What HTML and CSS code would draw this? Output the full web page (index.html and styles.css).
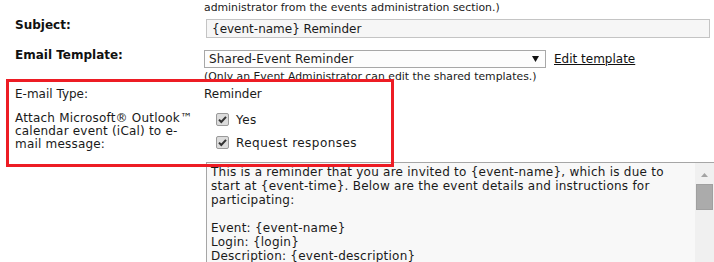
FILE: index.html
```html
<!DOCTYPE html>
<html lang="en">
<head>
<meta charset="utf-8">
<title>Email settings</title>
<link rel="stylesheet" href="styles.css">
</head>
<body>
<div class="page">
  <p class="note top-note">administrator from the events administration section.)</p>

  <div class="row row-subject">
    <div class="label bold">Subject:</div>
    <div class="value"><input class="text-input" type="text" value="{event-name} Reminder"></div>
  </div>

  <div class="row row-template">
    <div class="label bold">Email Template:</div>
    <div class="value template-value">
      <div class="select">
        <span class="select-text">Shared-Event Reminder</span>
        <svg class="select-arrow" width="7" height="6" viewBox="0 0 7 6"><path d="M0 0H7L3.5 6Z" fill="#111"/></svg>
      </div>
      <a class="link" href="#">Edit template</a>
    </div>
  </div>

  <p class="note indent-note">(Only an Event Administrator can edit the shared templates.)</p>

  <div class="row row-type">
    <div class="label">E-mail Type:</div>
    <div class="value">Reminder</div>
  </div>

  <div class="row row-attach">
    <div class="label attach-label">Attach Microsoft® Outlook™<br>calendar event (iCal) to e-<br>mail message:</div>
    <div class="value options">
      <div class="option">
        <svg class="check" width="13" height="13" viewBox="0 0 13 13"><rect x="0.5" y="0.5" width="12" height="12" rx="1.5" fill="#dcdcdc" stroke="#9a9a9a"/><path d="M3 6.6L5.3 9 10 3.8" fill="none" stroke="#333" stroke-width="2"/></svg>
        <span>Yes</span>
      </div>
      <div class="option second">
        <svg class="check" width="13" height="13" viewBox="0 0 13 13"><rect x="0.5" y="0.5" width="12" height="12" rx="1.5" fill="#dcdcdc" stroke="#9a9a9a"/><path d="M3 6.6L5.3 9 10 3.8" fill="none" stroke="#333" stroke-width="2"/></svg>
        <span>Request responses</span>
      </div>
    </div>
  </div>

  <div class="row row-body">
    <div class="label"></div>
    <div class="textarea">
      <div class="textarea-text">This is a reminder that you are invited to {event-name}, which is due to
start at {event-time}. Below are the event details and instructions for
participating:

Event: {event-name}
Login: {login}
Description: {event-description}</div>
      <div class="scrollbar">
        <svg class="scroll-arrow" width="7" height="4" viewBox="0 0 7 4"><path d="M0 4H7L3.5 0Z" fill="#a3a3a3"/></svg>
        <div class="thumb"></div>
      </div>
    </div>
  </div>

  <div class="highlight"></div>
</div>
</body>
</html>
```

FILE: styles.css
```css
body {
  margin: 0;
  background: #ffffff;
  font-family: "DejaVu Sans", Verdana, sans-serif;
  font-size: 12px;
  color: #1a1a1a;
  overflow: hidden;
}

.page {
  position: relative;
  width: 714px;
  height: 262px;
  padding-left: 15px;
  box-sizing: border-box;
  overflow: hidden;
}

.note {
  margin: 0;
  font-size: 10.85px;
  line-height: 13px;
  color: #1a1a1a;
  padding-left: 189px;
  white-space: nowrap;
}

.top-note {
  margin-top: 1px;
}

.indent-note {
  margin-top: 2px;
}

.row {
  display: grid;
  grid-template-columns: 189px 1fr;
}

.label {
  line-height: 14px;
  color: #1a1a1a;
}

.bold {
  font-weight: bold;
  color: #111111;
}

.value {
  line-height: 14px;
}

.row-subject {
  margin-top: 4px;
}

.text-input {
  display: block;
  box-sizing: border-box;
  margin: 1px 0 0 2px;
  width: 504px;
  height: 19px;
  padding: 0 5px;
  border: 1px solid #c4c4c4;
  background: #f6f6f6;
  font-family: inherit;
  font-size: 12px;
  color: #1a1a1a;
  outline: none;
}

.row-template {
  margin-top: 10px;
}

.template-value {
  display: flex;
  align-items: center;
  margin-top: 2px;
}

.select {
  box-sizing: border-box;
  width: 342px;
  height: 18px;
  border: 1px solid #a8a8a8;
  background: #fdfdfd;
  display: flex;
  align-items: center;
  padding: 0 6px 0 4px;
}

.select-text {
  flex: 1;
  line-height: 14px;
  letter-spacing: 0.1px;
}

.select-arrow {
  display: block;
}

.link {
  margin-left: 8px;
  color: #111111;
  text-decoration: underline;
  line-height: 14px;
}

.row-type {
  margin-top: 4px;
}

.row-attach {
  margin-top: 11px;
}

.attach-label {
  line-height: 13px;
  letter-spacing: 0.2px;
}

.options {
  letter-spacing: 0.45px;
}

.option {
  display: flex;
  align-items: center;
  height: 15px;
  gap: 7px;
}

.option.second {
  margin-top: 8px;
}

.check {
  display: block;
  margin-left: 12px;
}

.row-body {
  margin-top: 11px;
}

.textarea {
  margin-left: 2px;
  width: 512px;
  height: 110px;
  box-sizing: border-box;
  border: 1px solid #a6a6a6;
  background: #f8f8f8;
  display: flex;
}

.textarea-text {
  flex: 1;
  padding: 2px 4px;
  white-space: pre;
  line-height: 14px;
  letter-spacing: 0.24px;
  color: #1a1a1a;
  overflow: hidden;
}

.scrollbar {
  width: 22px;
  flex: none;
  background: #f0f0f0;
  display: flex;
  flex-direction: column;
  align-items: flex-start;
  padding-left: 1px;
  box-sizing: border-box;
}

.scroll-arrow {
  display: block;
  margin: 10px 0 0 5px;
}

.thumb {
  margin-top: 7px;
  width: 17px;
  height: 26px;
  box-sizing: border-box;
  background: #ababab;
  border: 1px solid #a0a0a0;
}

.highlight {
  position: absolute;
  left: 6px;
  top: 79px;
  width: 388px;
  height: 88px;
  box-sizing: border-box;
  border: 3px solid #ed1c24;
  pointer-events: none;
}
```
